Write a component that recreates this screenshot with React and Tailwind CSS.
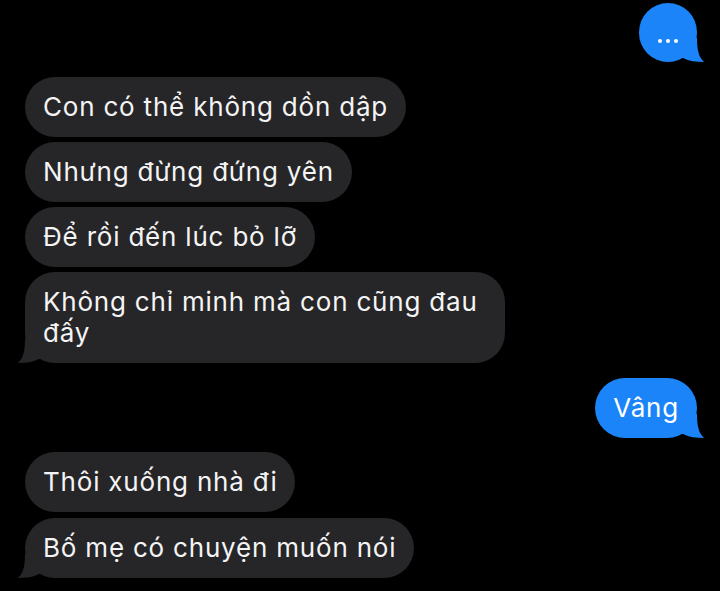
const GRAY = 'bg-[#262628]';

function LeftTail() {
    return (
        <svg className="absolute left-[-7px] bottom-0" width="32" height="24" viewBox="0 0 32 24">
            <path d="M7 0 C7 13 5 19 0 24 C8 24 15 23 21 20 L32 20 L32 0 Z" fill="#262628" />
        </svg>
    );
}

function RightTail() {
    return (
        <svg className="absolute right-[-7px] bottom-0" width="32" height="24" viewBox="0 0 32 24">
            <path d="M25 0 C25 13 27 19 32 24 C24 24 17 23 11 20 L0 20 L0 0 Z" fill="#1b84f9" />
        </svg>
    );
}

function Incoming({ text, tail }) {
    return (
        <div className={`relative self-start ml-[25px] max-w-[480px] ${GRAY} rounded-[30px] px-[18px] pt-[14px] pb-[15px] text-[26px] leading-[31px] tracking-[0.8px] text-[#f4f4f4]`}>
            {tail && <LeftTail />}
            <span className="relative">{text}</span>
        </div>
    );
}

export default function App() {
    return (
        <div
            className="w-[720px] h-[591px] bg-black overflow-hidden flex flex-col pt-[3px]"
            style={{ fontFamily: 'Inter, "Liberation Sans", Arial, sans-serif' }}
        >
            {/* typing bubble */}
            <div className="relative self-end mr-[23px] w-[58px] h-[59px] rounded-full bg-[#1b84f9] flex items-center justify-center gap-[4px] pt-[16px]">
                <RightTail />
                <span className="relative w-[4px] h-[4px] rounded-full bg-white" />
                <span className="relative w-[4px] h-[4px] rounded-full bg-white" />
                <span className="relative w-[4px] h-[4px] rounded-full bg-white" />
            </div>

            <div className="flex flex-col gap-[5px] mt-[15px]">
                <Incoming text="Con có thể không dồn dập" />
                <Incoming text="Nhưng đừng đứng yên" />
                <Incoming text="Để rồi đến lúc bỏ lỡ" />
                <Incoming text="Không chỉ minh mà con cũng đau đấy" tail />
            </div>

            <div className="relative self-end mr-[23px] mt-[15px] bg-[#1b84f9] rounded-[30px] px-[18px] pt-[14px] pb-[15px] text-[26px] leading-[31px] tracking-[0.8px] text-white">
                <RightTail />
                <span className="relative">Vâng</span>
            </div>

            <div className="flex flex-col gap-[6px] mt-[14px]">
                <Incoming text="Thôi xuống nhà đi" />
                <Incoming text="Bố mẹ có chuyện muốn nói" tail />
            </div>
        </div>
    );
}
